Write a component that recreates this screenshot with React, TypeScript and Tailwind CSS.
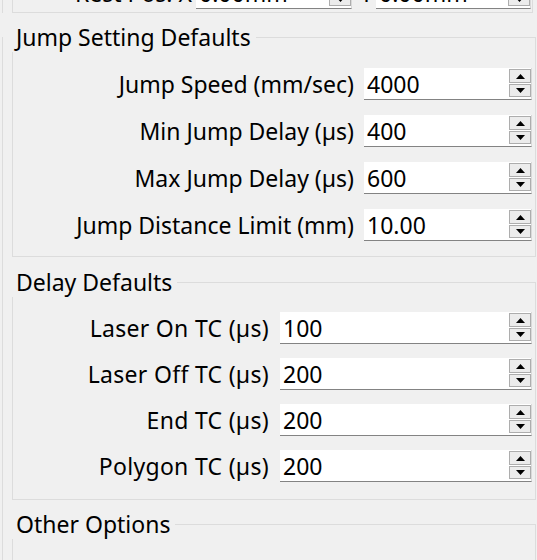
import React from 'react'

function Arrow({ up }: { up?: boolean }) {
  return (
    <svg width="9" height="5" viewBox="0 0 9 5" className="block">
      <path d={up ? 'M4.5 0L9 5H0Z' : 'M0 0H9L4.5 5Z'} fill="#000" />
    </svg>
  )
}

function SpinBox({ value }: { value: string }) {
  return (
    <div className="flex h-[32px] bg-white border-r border-b border-r-[#d9d9d9] border-b-[#838383]">
      <span className="flex-1 self-center pl-[3px] leading-[30px]">{value}</span>
      <div className="flex w-[22px] flex-col gap-px pt-px pb-[2px]">
        <div className="flex h-[14px] items-center justify-center border border-[#adadad] bg-[#ececec]">
          <Arrow up />
        </div>
        <div className="flex h-[13px] items-center justify-center border border-[#adadad] bg-[#ececec]">
          <Arrow />
        </div>
      </div>
    </div>
  )
}

function GroupBox({ title, className, children }: { title: string; className?: string; children?: React.ReactNode }) {
  return (
    <div className={`relative border border-[#dcdcdc] ${className ?? ''}`}>
      <span className="absolute left-[-1px] top-[-16px] bg-[#f0f0f0] pl-[4px] pr-[5px] leading-[30px] whitespace-nowrap">
        {title}
      </span>
      {children}
    </div>
  )
}

const jumpRows = [
  ['Jump Speed (mm/sec)', '4000'],
  ['Min Jump Delay (µs)', '400'],
  ['Max Jump Delay (µs)', '600'],
  ['Jump Distance Limit (mm)', '10.00'],
]

const delayRows = [
  ['Laser On TC (µs)', '100'],
  ['Laser Off TC (µs)', '200'],
  ['End TC (µs)', '200'],
  ['Polygon TC (µs)', '200'],
]

export default function App() {
  return (
    <div className="h-[560px] w-[537px] overflow-hidden bg-[#f0f0f0] font-['Noto_Sans',sans-serif] text-[23px] text-black">
      {/* rest position group, mostly scrolled out of view */}
      <div className="ml-[2px] border-l border-[#dcdcdc] pl-[9px] pr-[4px]">
        <div className="flex h-[13px] items-end overflow-hidden border-x border-b border-[#dcdcdc] pb-[3px]">
          <div className="flex shrink-0 items-center">
            <span className="w-[179px] text-right leading-[30px] whitespace-nowrap">Rest Pos. X</span>
            <div className="ml-[4px] w-[156px]">
              <SpinBox value="0.00mm" />
            </div>
            <span className="ml-[8px] w-[12px] leading-[30px]">Y</span>
            <div className="ml-[4px] w-[155px]">
              <SpinBox value="0.00mm" />
            </div>
          </div>
        </div>
      </div>

      <div className="h-[24px]" />

      <div className="ml-[2px] h-[523px] border-l border-[#dcdcdc] pl-[9px] pr-px">
        <GroupBox title="Jump Setting Defaults" className="pt-[30px] pb-[15px] pr-[3px]">
          <div className="grid grid-cols-[341px_1fr] items-center gap-x-[10px] gap-y-[15px]">
            {jumpRows.map(([label, value]) => (
              <React.Fragment key={label}>
                <span className="text-right whitespace-nowrap leading-[30px]">{label}</span>
                <SpinBox value={value} />
              </React.Fragment>
            ))}
          </div>
        </GroupBox>

        <GroupBox title="Delay Defaults" className="mt-[25px] pt-[29px] pb-[17px] pr-[3px]">
          <div className="grid grid-cols-[256px_1fr] items-center gap-x-[11px] gap-y-[14px]">
            {delayRows.map(([label, value]) => (
              <React.Fragment key={label}>
                <span className="text-right whitespace-nowrap leading-[30px] tracking-[0.3px]">{label}</span>
                <SpinBox value={value} />
              </React.Fragment>
            ))}
          </div>
        </GroupBox>

        <GroupBox title="Other Options" className="mt-[24px] h-[80px]" />
      </div>
    </div>
  )
}
